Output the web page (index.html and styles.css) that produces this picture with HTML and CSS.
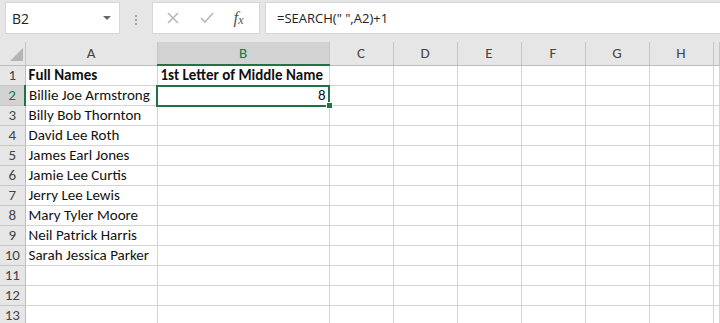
FILE: index.html
```html
<!DOCTYPE html>
<html lang="en">

<head>
    <meta charset="UTF-8">
    <meta name="viewport" content="width=device-width, initial-scale=1.0">
    <title>Book1 - Excel</title>
    <link rel="stylesheet" href="styles.css">
</head>

<body>
    <div class="toolbar">
        <div class="name-box">
            <span>B2</span>
            <span class="dropdown-arrow"></span>
        </div>
        <div class="grip">
            <span></span><span></span><span></span>
        </div>
        <div class="formula-icons">
            <svg width="14" height="14" viewBox="0 0 14 14">
                <path d="M2 2 L12 12 M12 2 L2 12" stroke="#b8b8b8" stroke-width="1.6" fill="none" />
            </svg>
            <svg width="16" height="14" viewBox="0 0 16 14">
                <path d="M2 7 L6 11 L14 2" stroke="#b8b8b8" stroke-width="1.6" fill="none" />
            </svg>
            <span class="fx">f<sub>x</sub></span>
        </div>
        <div class="formula-box">=SEARCH(" ",A2)+1</div>
    </div>

    <table class="sheet">
        <colgroup>
            <col class="col-rowhead">
            <col class="col-a">
            <col class="col-b">
            <col class="col-std"><col class="col-std"><col class="col-std">
            <col class="col-std"><col class="col-std"><col class="col-std">
            <col>
        </colgroup>
        <thead>
            <tr>
                <th class="corner"><span class="corner-tri"></span></th>
                <th>A</th>
                <th class="active">B</th>
                <th>C</th>
                <th>D</th>
                <th>E</th>
                <th>F</th>
                <th>G</th>
                <th>H</th>
                <th></th>
            </tr>
        </thead>
        <tbody>
            <tr><th>1</th><td class="bold">Full Names</td><td class="bold">1st Letter of Middle Name</td><td></td><td></td><td></td><td></td><td></td><td></td><td></td></tr>
            <tr><th class="active">2</th><td>Billie Joe Armstrong</td><td class="num selected">8<span class="fill-handle"></span></td><td></td><td></td><td></td><td></td><td></td><td></td><td></td></tr>
            <tr><th>3</th><td>Billy Bob Thornton</td><td></td><td></td><td></td><td></td><td></td><td></td><td></td><td></td></tr>
            <tr><th>4</th><td>David Lee Roth</td><td></td><td></td><td></td><td></td><td></td><td></td><td></td><td></td></tr>
            <tr><th>5</th><td>James Earl Jones</td><td></td><td></td><td></td><td></td><td></td><td></td><td></td><td></td></tr>
            <tr><th>6</th><td>Jamie Lee Curtis</td><td></td><td></td><td></td><td></td><td></td><td></td><td></td><td></td></tr>
            <tr><th>7</th><td>Jerry Lee Lewis</td><td></td><td></td><td></td><td></td><td></td><td></td><td></td><td></td></tr>
            <tr><th>8</th><td>Mary Tyler Moore</td><td></td><td></td><td></td><td></td><td></td><td></td><td></td><td></td></tr>
            <tr><th>9</th><td>Neil Patrick Harris</td><td></td><td></td><td></td><td></td><td></td><td></td><td></td><td></td></tr>
            <tr><th>10</th><td>Sarah Jessica Parker</td><td></td><td></td><td></td><td></td><td></td><td></td><td></td><td></td></tr>
            <tr><th>11</th><td></td><td></td><td></td><td></td><td></td><td></td><td></td><td></td><td></td></tr>
            <tr><th>12</th><td></td><td></td><td></td><td></td><td></td><td></td><td></td><td></td><td></td></tr>
            <tr><th>13</th><td></td><td></td><td></td><td></td><td></td><td></td><td></td><td></td><td></td></tr>
        </tbody>
    </table>
</body>

</html>
```

FILE: styles.css
```css
body {
    margin: 0;
    background-color: #ffffff;
    font-family: 'Carlito', 'Lato', sans-serif;
    overflow: hidden;
}

/* formula bar */
.toolbar {
    display: flex;
    align-items: flex-start;
    height: 42px;
    padding-top: 2px;
    box-sizing: border-box;
    background-color: #e6e6e6;
}

.name-box {
    display: flex;
    align-items: center;
    justify-content: space-between;
    width: 115px;
    height: 32px;
    margin-left: 5px;
    padding: 0 8px 0 6px;
    box-sizing: border-box;
    background-color: #ffffff;
    border: 1px solid #d6d6d6;
    font-family: 'Open Sans', sans-serif;
    font-size: 14px;
    color: #222;
}

.dropdown-arrow {
    width: 0;
    height: 0;
    border-left: 4px solid transparent;
    border-right: 4px solid transparent;
    border-top: 4px solid #666;
}

.grip {
    display: flex;
    flex-direction: column;
    gap: 2px;
    width: 32px;
    align-items: center;
    padding-top: 13px;
}

.grip span {
    width: 2px;
    height: 2px;
    background-color: #a0a0a0;
}

.formula-icons {
    display: flex;
    align-items: center;
    justify-content: space-around;
    width: 108px;
    height: 32px;
    padding: 0 6px 0 4px;
    box-sizing: border-box;
    background-color: #ffffff;
    border: 1px solid #d6d6d6;
}

.fx {
    font-family: 'Liberation Serif', serif;
    font-style: italic;
    font-size: 17px;
    color: #555;
}

.fx sub {
    font-size: 12px;
    vertical-align: -1px;
}

.formula-box {
    flex: 1;
    height: 32px;
    margin-left: 5px;
    padding-left: 11px;
    line-height: 31px;
    box-sizing: border-box;
    background-color: #ffffff;
    border: 1px solid #d6d6d6;
    border-right: none;
    font-family: 'Open Sans', sans-serif;
    font-size: 13px;
    color: #222;
}

/* grid */
.sheet {
    border-collapse: collapse;
    table-layout: fixed;
    width: 100%;
    font-size: 15px;
}

.col-rowhead { width: 25px; }
.col-a { width: 132px; }
.col-b { width: 172px; }
.col-std { width: 64px; }

.sheet th,
.sheet td {
    height: 19px;
    padding: 0 3px;
    border-right: 1px solid #d4d4d4;
    border-bottom: 1px solid #d4d4d4;
    white-space: nowrap;
    overflow: visible;
    color: #111;
    text-align: left;
    line-height: 19px;
}

.sheet thead th {
    height: 22px;
    background-color: #e6e6e6;
    border-right-color: #c6c6c6;
    border-bottom-color: #bdbdbd;
    text-align: center;
    font-weight: normal;
    color: #444;
}

.sheet tbody th {
    background-color: #e6e6e6;
    border-right-color: #bdbdbd;
    border-bottom-color: #c6c6c6;
    text-align: center;
    font-weight: normal;
    color: #444;
    padding: 0;
}

.sheet thead th.active {
    background-color: #d2d2d2;
    color: #217346;
    border-bottom: 2px solid #217346;
}

.sheet tbody th.active {
    background-color: #d2d2d2;
    color: #217346;
    border-right: 2px solid #217346;
}

.corner {
    position: relative;
}

.corner-tri {
    position: absolute;
    right: 2px;
    bottom: 4px;
    width: 0;
    height: 0;
    border-left: 13px solid transparent;
    border-bottom: 13px solid #b4b4b4;
}

.bold {
    font-weight: bold;
}

.num {
    text-align: right !important;
}

.selected {
    position: relative;
    outline: 2px solid #217346;
    outline-offset: -1px;
}

.fill-handle {
    position: absolute;
    right: -4px;
    bottom: -4px;
    width: 5px;
    height: 5px;
    background-color: #217346;
    border: 1px solid #ffffff;
}
```
